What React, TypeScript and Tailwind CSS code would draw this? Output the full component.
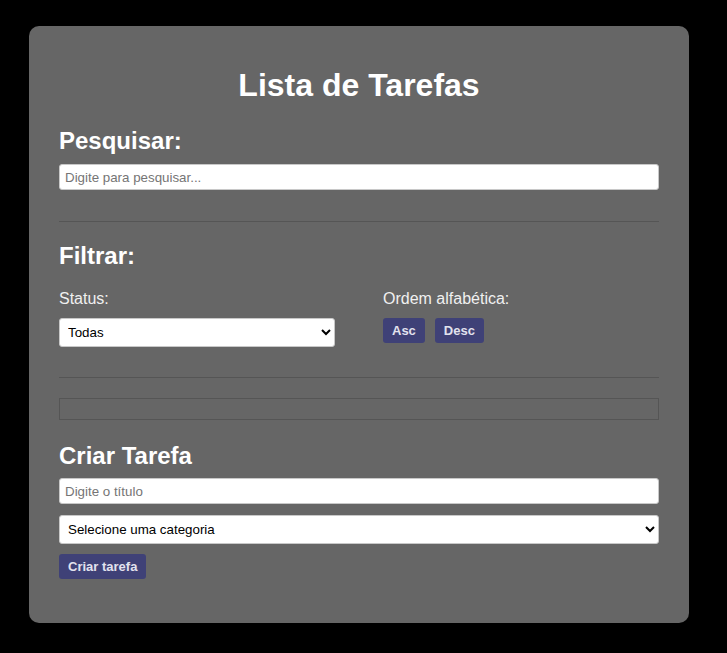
import React from "react";

const font = { fontFamily: '"Liberation Sans", Arial, sans-serif' };

function SectionTitle({ children, className = "" }: { children: React.ReactNode; className?: string }) {
  return <h2 className={`text-[24px] font-bold leading-[28px] text-white ${className}`}>{children}</h2>;
}

function Button({ children }: { children: React.ReactNode }) {
  return (
    <button className="h-[25px] rounded-[3px] bg-[#3f4177] px-[9px] text-[13px] font-bold text-[#e2e2ee]">
      {children}
    </button>
  );
}

export default function App() {
  return (
    <div className="min-h-screen bg-black pt-[26px] pb-[30px]" style={font}>
      <div className="ml-[29px] w-[660px] rounded-[10px] bg-[#666666] px-[30px] pt-[41px] pb-[44px]">
        <h1 className="text-center text-[32px] font-bold leading-[37px] text-white">Lista de Tarefas</h1>

        <SectionTitle className="mt-[23px]">Pesquisar:</SectionTitle>
        <input
          className="mt-[9px] block h-[26px] w-full rounded-[3px] border border-[#c8c8c8] bg-white px-[5px] text-[13.33px] text-black placeholder:text-[#757575]"
          placeholder="Digite para pesquisar..."
        />

        <hr className="mt-[31px] border-0 border-t border-[#555555]" />

        <SectionTitle className="mt-[20px]">Filtrar:</SectionTitle>
        <div className="mt-[20px] grid grid-cols-2 gap-x-[48px]">
          <div>
            <label className="block text-[16px] leading-[18px] text-[#f0f0f0]">Status:</label>
            <select className="mt-[10px] block h-[29px] w-full rounded-[3px] border border-[#c8c8c8] bg-white px-[4px] text-[13.33px] text-black">
              <option>Todas</option>
              <option>Concluídas</option>
              <option>Pendentes</option>
            </select>
          </div>
          <div>
            <label className="block text-[16px] leading-[18px] text-[#f0f0f0]">Ordem alfabética:</label>
            <div className="mt-[10px] flex gap-[10px]">
              <Button>Asc</Button>
              <Button>Desc</Button>
            </div>
          </div>
        </div>

        <hr className="mt-[30px] border-0 border-t border-[#555555]" />

        <div className="mt-[20px] h-[22px] border border-[#555555]" />

        <SectionTitle className="mt-[22px]">Criar Tarefa</SectionTitle>
        <input
          className="mt-[8px] block h-[26px] w-full rounded-[3px] border border-[#c8c8c8] bg-white px-[5px] text-[13.33px] text-black placeholder:text-[#757575]"
          placeholder="Digite o título"
        />
        <select className="mt-[11px] block h-[29px] w-full rounded-[3px] border border-[#c8c8c8] bg-white px-[4px] text-[13.33px] text-black">
          <option>Selecione uma categoria</option>
          <option>Trabalho</option>
          <option>Pessoal</option>
        </select>
        <div className="mt-[10px]">
          <Button>Criar tarefa</Button>
        </div>
      </div>
    </div>
  );
}
